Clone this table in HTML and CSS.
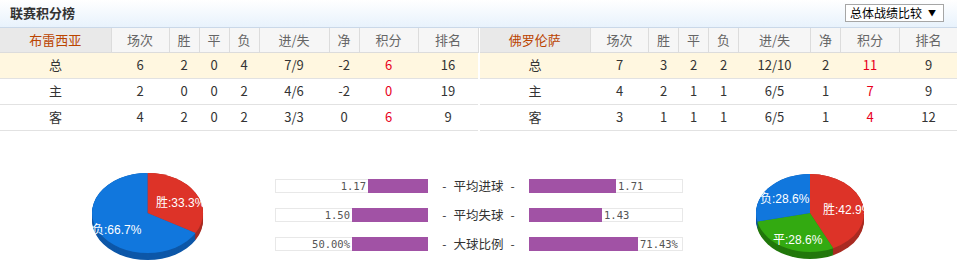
FILE: index.html
```
<!DOCTYPE html>
<html lang="zh">
<head>
<meta charset="utf-8">
<link rel="stylesheet" href="styles.css">
</head>
<body>
<div class="topbar">
  <span class="title">联赛积分榜</span>
  <div class="select"><span>总体战绩比较</span><span class="arrow">▼</span></div>
</div>
<div class="tables">
  <table class="stand left">
    <colgroup><col style="width:111px"><col style="width:58px"><col style="width:30px"><col style="width:30px"><col style="width:30px"><col style="width:70px"><col style="width:30px"><col style="width:59px"><col style="width:60px"></colgroup>
    <thead><tr><th class="team">布雷西亚</th><th>场次</th><th>胜</th><th>平</th><th>负</th><th>进/失</th><th>净</th><th>积分</th><th>排名</th></tr></thead>
    <tbody>
      <tr class="hl"><td>总</td><td>6</td><td>2</td><td>0</td><td>4</td><td>7/9</td><td>-2</td><td class="pts">6</td><td>16</td></tr>
      <tr><td>主</td><td>2</td><td>0</td><td>0</td><td>2</td><td>4/6</td><td>-2</td><td class="pts">0</td><td>19</td></tr>
      <tr><td>客</td><td>4</td><td>2</td><td>0</td><td>2</td><td>3/3</td><td>0</td><td class="pts">6</td><td>9</td></tr>
    </tbody>
  </table>
  <table class="stand right">
    <colgroup><col style="width:111px"><col style="width:58px"><col style="width:30px"><col style="width:30px"><col style="width:30px"><col style="width:72px"><col style="width:30px"><col style="width:59px"><col style="width:58px"></colgroup>
    <thead><tr><th class="team">佛罗伦萨</th><th>场次</th><th>胜</th><th>平</th><th>负</th><th>进/失</th><th>净</th><th>积分</th><th>排名</th></tr></thead>
    <tbody>
      <tr class="hl"><td>总</td><td>7</td><td>3</td><td>2</td><td>2</td><td>12/10</td><td>2</td><td class="pts">11</td><td>9</td></tr>
      <tr><td>主</td><td>4</td><td>2</td><td>1</td><td>1</td><td>6/5</td><td>1</td><td class="pts">7</td><td>9</td></tr>
      <tr><td>客</td><td>3</td><td>1</td><td>1</td><td>1</td><td>6/5</td><td>1</td><td class="pts">4</td><td>12</td></tr>
    </tbody>
  </table>
</div>
<div class="lower">
  <svg class="pie pie-left" width="120" height="100" viewBox="0 0 120 100">
    <g id="ls">
      <path fill="#a92b22" d="M59.5,47 L59.5,7 A55.5,40 0 0,1 107.6,67 Z"/>
      <path fill="#0d57a8" d="M59.5,47 L107.6,67 A55.5,40 0 1,1 59.5,7 Z"/>
    </g>
    <use href="#ls" y="7"/><use href="#ls" y="6"/><use href="#ls" y="5"/><use href="#ls" y="4"/><use href="#ls" y="3"/><use href="#ls" y="2"/><use href="#ls" y="1"/>
    <path fill="#dd3328" d="M59.5,47 L59.5,7 A55.5,40 0 0,1 107.6,67 Z"/>
    <path fill="#1177dd" d="M59.5,47 L107.6,67 A55.5,40 0 1,1 59.5,7 Z"/>
    <text class="lbl" x="68" y="41">胜:33.3%</text>
    <text class="lbl" x="4" y="68">负:66.7%</text>
  </svg>
  <div class="stats">
    <div class="srow">
      <div class="bar bl"><span class="num">1.17</span><span class="fill" style="width:60px"></span></div>
      <div class="slabel"><span class="dash">-</span>平均进球<span class="dash">-</span></div>
      <div class="bar br"><span class="fill" style="width:87px"></span><span class="num">1.71</span></div>
    </div>
    <div class="srow">
      <div class="bar bl"><span class="num">1.50</span><span class="fill" style="width:76px"></span></div>
      <div class="slabel"><span class="dash">-</span>平均失球<span class="dash">-</span></div>
      <div class="bar br"><span class="fill" style="width:73px"></span><span class="num">1.43</span></div>
    </div>
    <div class="srow">
      <div class="bar bl"><span class="num">50.00%</span><span class="fill" style="width:76px"></span></div>
      <div class="slabel"><span class="dash">-</span>大球比例<span class="dash">-</span></div>
      <div class="bar br"><span class="fill" style="width:109px"></span><span class="num">71.43%</span></div>
    </div>
  </div>
  <svg class="pie pie-right" width="130" height="100" viewBox="0 0 130 100">
    <g id="rs">
      <path fill="#a92b22" d="M60,47 L60,8 A54,39 0 0,1 83.33,82.17 Z"/>
      <path fill="#22780c" d="M60,47 L83.33,82.17 A54,39 0 0,1 7.30,55.51 Z"/>
      <path fill="#0d57a8" d="M60,47 L7.30,55.51 A54,39 0 0,1 60,8 Z"/>
    </g>
    <use href="#rs" y="7"/><use href="#rs" y="6"/><use href="#rs" y="5"/><use href="#rs" y="4"/><use href="#rs" y="3"/><use href="#rs" y="2"/><use href="#rs" y="1"/>
    <path fill="#dd3328" d="M60,47 L60,8 A54,39 0 0,1 83.33,82.17 Z"/>
    <path fill="#33aa11" d="M60,47 L83.33,82.17 A54,39 0 0,1 7.30,55.51 Z"/>
    <path fill="#1177dd" d="M60,47 L7.30,55.51 A54,39 0 0,1 60,8 Z"/>
    <text class="lbl" x="10" y="37">负:28.6%</text>
    <text class="lbl" x="73" y="48">胜:42.9%</text>
    <text class="lbl" x="23" y="78">平:28.6%</text>
  </svg>
</div>
</body>
</html>
```
FILE: styles.css
```
* { box-sizing: border-box; }
body {
  margin: 0;
  width: 957px;
  height: 280px;
  overflow: hidden;
  background: #fff;
  font-family: "Noto Sans CJK SC", "Liberation Sans", sans-serif;
  font-size: 13px;
  color: #333;
}
.topbar {
  height: 28px;
  display: flex;
  align-items: center;
  justify-content: space-between;
  padding: 0 13px 1px 10px;
  background: linear-gradient(#ffffff, #e8f2fc);
  border-bottom: 1px solid #cad8e8;
}
.title {
  font-weight: bold;
  font-size: 13px;
  color: #333;
  line-height: 16px;
}
.select {
  width: 99px;
  height: 18px;
  border: 1px solid #a6a6a6;
  background: #fff;
  display: flex;
  align-items: center;
  justify-content: space-between;
  padding: 0 7px 0 4px;
  font-size: 12px;
  line-height: 16px;
  color: #000;
  white-space: nowrap;
}
.arrow { font-size: 8px; }
.tables {
  display: flex;
  gap: 1px;
}
.stand {
  border-collapse: collapse;
  table-layout: fixed;
  width: 478px;
}
.stand th {
  height: 24px;
  padding: 0;
  font-weight: normal;
  color: #666;
  background: #f6f6f6;
  border-right: 1px solid #dcdcdc;
  border-bottom: 1px solid #dcdcdc;
  text-align: center;
  line-height: 16px;
}
.stand th.team {
  background: #e9e9e9;
  color: #bb4400;
}
.stand td {
  height: 26px;
  padding: 0;
  text-align: center;
  border-bottom: 1px solid #e2e2e2;
  line-height: 16px;
  color: #333;
}
.stand tr.hl td { background: #fff7e0; }
.stand td.pts { color: #e8001c; }
.lower {
  display: flex;
  align-items: flex-start;
  padding-top: 35px;
}
.pie { overflow: visible; flex: none; }
.pie-left { margin-left: 88px; }
.pie-right { margin-left: 67px; }
.lbl {
  fill: #fff;
  font-family: "Liberation Sans", "Noto Sans CJK SC", sans-serif;
  font-size: 12px;
}
.stats {
  margin-left: 67px;
  padding-top: 13px;
  display: flex;
  flex-direction: column;
  gap: 15px;
}
.srow {
  display: flex;
  align-items: center;
  height: 14px;
}
.bar {
  width: 153px;
  height: 14px;
  background: #fff;
  box-shadow: inset 0 0 0 1px #e8e8e8;
  display: flex;
  align-items: stretch;
}
.bl { justify-content: flex-end; }
.br { width: 154px; }
.fill {
  display: block;
  background: #a152a5;
}
.num {
  font-family: "DejaVu Sans Mono", "Liberation Mono", monospace;
  font-size: 10.5px;
  line-height: 14px;
  color: #555;
}
.bl .num { padding-right: 2px; }
.br .num { padding-left: 2px; }
.slabel {
  width: 101px;
  display: flex;
  justify-content: center;
  align-items: center;
  font-size: 12.5px;
  line-height: 14px;
  color: #333;
  white-space: nowrap;
}
.dash { margin: 0 7px; font-size: 12px; }
```
